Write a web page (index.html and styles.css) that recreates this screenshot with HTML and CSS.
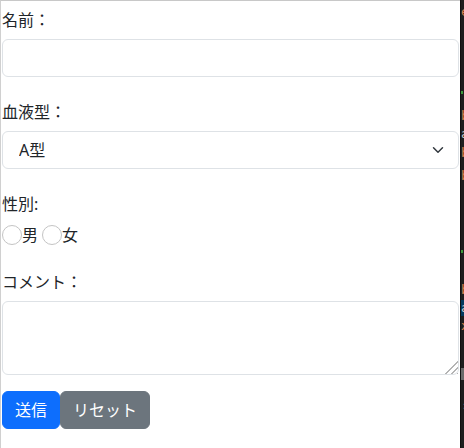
FILE: index.html
```html
<!DOCTYPE html>
<html lang="ja">
<head>
<meta charset="utf-8">
<link rel="stylesheet" href="styles.css">
</head>
<body>
<div class="screen">
  <form class="panel">
    <div class="group">
      <label class="form-label" for="name">名前：</label>
      <input class="form-control" id="name" type="text">
    </div>
    <div class="group">
      <label class="form-label" for="blood">血液型：</label>
      <select class="form-select" id="blood">
        <option>A型</option>
        <option>B型</option>
        <option>O型</option>
        <option>AB型</option>
      </select>
    </div>
    <div class="group">
      <div class="form-label">性別:</div>
      <div class="radios">
        <label class="radio"><input type="radio" name="sex">男</label>
        <label class="radio"><input type="radio" name="sex">女</label>
      </div>
    </div>
    <div class="group last">
      <label class="form-label" for="comment">コメント：</label>
      <div class="area-wrap">
        <textarea class="form-control area" id="comment"></textarea>
      </div>
    </div>
    <div class="buttons">
      <button type="submit" class="btn primary">送信</button><button type="reset" class="btn secondary">リセット</button>
    </div>
  </form>
  <div class="editor">
    <span class="frag f1">e</span>
    <span class="frag f2"></span>
    <span class="frag f3">b</span>
    <span class="frag f4">a</span>
    <span class="frag f5">b</span>
    <span class="frag f6">b</span>
    <span class="frag f7"></span>
    <span class="frag f8">b</span>
    <span class="frag f9">a</span>
    <span class="frag f10">x</span>
    <span class="frag f11"></span>
    <span class="frag f12">›</span>
  </div>
</div>
</body>
</html>
```
FILE: styles.css
```css
* { box-sizing: border-box; }
html, body { margin: 0; padding: 0; }
body {
  background: #1e1e1e;
  font-family: "Noto Sans", "Noto Sans CJK JP", sans-serif;
  font-size: 16px;
  line-height: 1.5;
  color: #212529;
  width: 464px;
  height: 448px;
  overflow: hidden;
}
.screen {
  display: flex;
  height: 448px;
}
.panel {
  width: 460px;
  flex: none;
  background: #fff;
  border-top: 1px solid #c8c8c8;
  border-left: 1px solid #d0d0d0;
  padding: 6px 1px 0 1px;
  margin: 0;
  height: 448px;
}
.group { margin-bottom: 22px; }
.group.last { margin-bottom: 16px; }
.form-label {
  display: block;
  margin-bottom: 8px;
  height: 24px;
  padding-top: 1px;
}
.form-control, .form-select {
  display: block;
  width: 457px;
  height: 38px;
  padding: 6px 12px;
  font: inherit;
  color: #212529;
  background-color: #fff;
  border: 1px solid #dee2e6;
  border-radius: 6px;
  margin: 0;
  outline: none;
}
.form-select {
  appearance: none;
  -webkit-appearance: none;
  padding: 6px 36px 6px 16px;
  background-image: url("data:image/svg+xml,%3csvg xmlns='http://www.w3.org/2000/svg' viewBox='0 0 16 16'%3e%3cpath fill='none' stroke='%23343a40' stroke-linecap='round' stroke-linejoin='round' stroke-width='2' d='m2 5 6 6 6-6'/%3e%3c/svg%3e");
  background-repeat: no-repeat;
  background-position: right 12px center;
  background-size: 16px 12px;
}
.area-wrap {
  position: relative;
  width: 457px;
}
.area {
  height: 74px;
  resize: none;
}
.area-wrap::after {
  content: "";
  position: absolute;
  right: 1px;
  bottom: 1px;
  width: 14px;
  height: 14px;
  background: repeating-linear-gradient(135deg, transparent 0 2.5px, #b4b4b4 2.5px 4px);
  clip-path: polygon(100% 0, 100% 100%, 0 100%);
}
.radios {
  display: flex;
  align-items: center;
  height: 24px;
  gap: 4px;
}
.radio {
  display: flex;
  align-items: center;
}
.radio input {
  appearance: none;
  -webkit-appearance: none;
  width: 20px;
  height: 20px;
  margin: 0;
  border: 1px solid #c4c4c4;
  border-radius: 50%;
  background: #fff;
}
.buttons { display: flex; }
.btn {
  font: inherit;
  height: 38px;
  padding: 6px 12px;
  border: 1px solid transparent;
  border-radius: 6px;
  color: #fff;
  margin: 0;
  line-height: 24px;
}
.primary { background: #0d6efd; border-color: #0d6efd; }
.secondary { background: #6c757d; border-color: #6c757d; }
.editor {
  position: relative;
  flex: 1;
  background: #1e1e1e;
  border-left: 1px solid #111;
  overflow: hidden;
  font-family: "DejaVu Sans Mono", monospace;
  font-size: 13px;
  line-height: 16px;
}
.frag {
  position: absolute;
  left: 0;
  color: #ce9178;
}
.f1 { top: 4px; color: #d7834f; }
.f2 { top: 91px; width: 2px; height: 3px; background: #3c9a3c; }
.f3 { top: 108px; color: #d7834f; }
.f4 { top: 126px; color: #cccccc; }
.f5 { top: 145px; color: #d7834f; }
.f6 { top: 168px; color: #d7834f; }
.f7 { top: 250px; width: 2px; height: 3px; background: #3c9a3c; }
.f8 { top: 282px; color: #d7834f; }
.f9 { top: 300px; color: #cccccc; background: #04395e; width: 4px; }
.f10 { top: 318px; color: #d7834f; }
.f11 { top: 368px; width: 4px; height: 12px; background: #6a6a6a; }
.f12 { top: 398px; color: #7a7a7a; }
```
